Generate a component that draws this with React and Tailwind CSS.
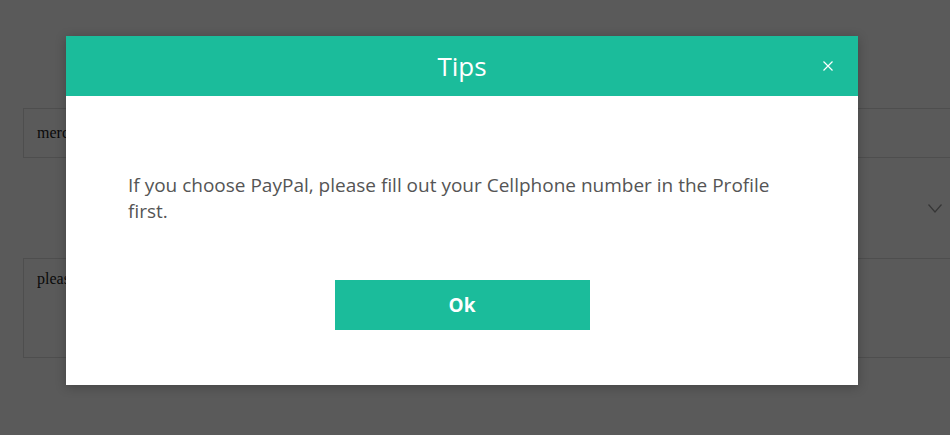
export default function App() {
  return (
    <div className="relative w-[950px] h-[435px] overflow-hidden bg-white">
      {/* page behind the overlay */}
      <div className="pl-[23px] pt-[108px] font-['Liberation_Serif',serif] text-[16px] text-[#222]">
        <div className="w-[940px] h-[50px] border border-[#dcdcdc] flex items-center pl-[13px]">merchant@example.com</div>
        <div className="w-[927px] h-[100px] flex items-center justify-end pr-[8px]">
          <svg width="14" height="9" viewBox="0 0 14 9" fill="none" stroke="#9a9a9a" strokeWidth="1.3">
            <path d="M0.5 0.5 L7 8 L13.5 0.5" />
          </svg>
        </div>
        <div className="w-[940px] h-[100px] border border-[#dcdcdc] pl-[13px] pt-[8px]">please enter the remarks</div>
      </div>

      {/* overlay */}
      <div className="absolute inset-0 bg-[rgba(0,0,0,0.648)]" />

      {/* modal */}
      <div className="absolute left-[66px] top-[36px] w-[792px] h-[349px] bg-white shadow-[0_2px_10px_rgba(0,0,0,0.25)] flex flex-col font-['Open_Sans',sans-serif]">
        <div className="relative h-[60px] bg-[#1bbc9b] flex items-center justify-center">
          <span className="text-white text-[26px] leading-none">Tips</span>
          <button className="absolute right-[25px] top-[25px] w-[10px] h-[10px]">
            <svg width="10" height="10" viewBox="0 0 10 10" stroke="white" strokeWidth="1.2" className="block">
              <path d="M0.5 0.5 L9.5 9.5 M9.5 0.5 L0.5 9.5" />
            </svg>
          </button>
        </div>
        <div className="px-[62px] pt-[76px] text-[19px] leading-[26px] text-[#555]">
          If you choose PayPal, please fill out your Cellphone number in the Profile first.
        </div>
        <div className="flex justify-center pt-[56px]">
          <button className="w-[255px] h-[50px] bg-[#1bbc9b] text-white text-[19px] font-bold">Ok</button>
        </div>
      </div>
    </div>
  );
}
